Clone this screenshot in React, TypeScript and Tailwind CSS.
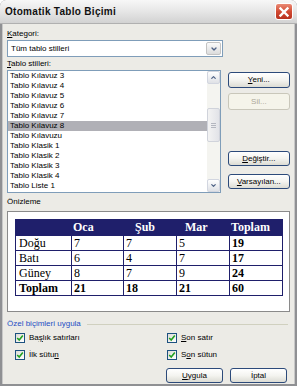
import { ChevronDown, ChevronUp } from 'lucide-react'

const styles = [
    'Tablo Kılavuz 3',
    'Tablo Kılavuz 4',
    'Tablo Kılavuz 5',
    'Tablo Kılavuz 6',
    'Tablo Kılavuz 7',
    'Tablo Kılavuz 8',
    'Tablo Kılavuzu',
    'Tablo Klasik 1',
    'Tablo Klasik 2',
    'Tablo Klasik 3',
    'Tablo Klasik 4',
    'Tablo Liste 1',
]

const rows = [
    { name: 'Doğu', v: ['7', '7', '5'], total: '19' },
    { name: 'Batı', v: ['6', '4', '7'], total: '17' },
    { name: 'Güney', v: ['8', '7', '9'], total: '24' },
]

function XpButton({ children, disabled, className = '' }: { children: React.ReactNode; disabled?: boolean; className?: string }) {
    return (
        <div
            className={
                'flex items-center justify-center rounded-[3px] border ' +
                (disabled
                    ? 'border-[#c9c7ba] bg-[#f5f4ea] text-[#aca899] '
                    : 'border-[#2c4a7a] bg-gradient-to-b from-white via-[#f4f4f0] to-[#dcdcd4] text-black ') +
                className
            }
        >
            {children}
        </div>
    )
}

function Check({ label }: { label: React.ReactNode }) {
    return (
        <div className="flex items-center gap-[4px] h-[12px]">
            <div className="w-[10px] h-[10px] border border-[#1c5180] bg-gradient-to-br from-[#dcdcd6] to-white flex items-center justify-center">
                <svg viewBox="0 0 10 10" className="w-[8px] h-[8px]">
                    <path d="M1.5 5 L4 7.5 L8.5 2" stroke="#21a121" strokeWidth="2" fill="none" />
                </svg>
            </div>
            <span>{label}</span>
        </div>
    )
}

export default function App() {
    return (
        <div className="w-[297px] h-[386px] bg-[#8f9093] p-[2px] pt-0 rounded-t-[6px] font-['Liberation_Sans',Arial,sans-serif] text-[8px] text-black overflow-hidden">
            <div className="h-[24px] flex items-center justify-between px-[3px] bg-gradient-to-b from-[#f7f7f7] via-[#e6e6e6] to-[#d2d2d2] rounded-t-[5px] border-b border-[#b0b0b0] -mx-[2px]">
                <span className="text-[10px] font-bold text-[#111] tracking-[0.3px] pl-[2px]">Otomatik Tablo Biçimi</span>
                <div className="w-[18px] h-[17px] rounded-[3px] border border-white bg-gradient-to-b from-[#e98a75] via-[#d24a33] to-[#b8321f] flex items-center justify-center mr-[1px]">
                    <svg viewBox="0 0 12 12" className="w-[12px] h-[12px]">
                        <path d="M2.5 2.5 L9.5 9.5 M9.5 2.5 L2.5 9.5" stroke="white" strokeWidth="2.4" strokeLinecap="square" />
                    </svg>
                </div>
            </div>

            <div className="h-[360px] bg-[#ecebe6] border-x border-[#c8c8c8] px-[4px] flex flex-col">
                <div className="mt-[5px] h-[10px] leading-[10px]">
                    <u>K</u>ategori:
                </div>
                <div className="mt-[1px] w-[216px] h-[17px] bg-white border border-[#7f9db9] flex items-center justify-between pl-[3px] pr-[1px]">
                    <span>Tüm tablo stilleri</span>
                    <div className="w-[15px] h-[13px] rounded-[2px] bg-gradient-to-b from-[#fbfbfb] to-[#dcdcdc] border border-[#c3c3c3] flex items-center justify-center">
                        <ChevronDown className="w-[8px] h-[8px] text-[#4d6185]" strokeWidth={4} />
                    </div>
                </div>
                <div className="mt-[2px] h-[10px] leading-[10px]">
                    <u>T</u>ablo stilleri:
                </div>

                <div className="flex mt-[1px]">
                    <div className="w-[216px] h-[123px] bg-white border border-[#7f9db9] flex">
                        <div className="flex-1">
                            {styles.map((s) => (
                                <div
                                    key={s}
                                    className={'h-[10px] leading-[10px] pl-[2px] ' + (s === 'Tablo Kılavuz 8' ? 'bg-[#b0b0b6]' : '')}
                                >
                                    {s}
                                </div>
                            ))}
                        </div>
                        <div className="w-[13px] bg-[#f4f4f0] flex flex-col">
                            <div className="h-[13px] rounded-[2px] border border-[#d2d6e0] bg-gradient-to-b from-white to-[#dfe1e6] flex items-center justify-center">
                                <ChevronUp className="w-[7px] h-[7px] text-[#4d6185]" strokeWidth={4} />
                            </div>
                            <div className="h-[24px]" />
                            <div className="h-[34px] rounded-[2px] border border-[#d0d3db] bg-gradient-to-r from-[#f3f3f3] to-[#e2e3e8] flex flex-col items-center justify-center gap-[1px]">
                                <div className="w-[5px] h-px bg-[#b4b7c0]" />
                                <div className="w-[5px] h-px bg-[#b4b7c0]" />
                                <div className="w-[5px] h-px bg-[#b4b7c0]" />
                            </div>
                            <div className="flex-1" />
                            <div className="h-[13px] rounded-[2px] border border-[#d2d6e0] bg-gradient-to-b from-white to-[#dfe1e6] flex items-center justify-center">
                                <ChevronDown className="w-[7px] h-[7px] text-[#4d6185]" strokeWidth={4} />
                            </div>
                        </div>
                    </div>

                    <div className="ml-[7px] w-[63px] flex flex-col">
                        <XpButton className="mt-[2px] h-[16px]">
                            <span><u>Y</u>eni...</span>
                        </XpButton>
                        <XpButton disabled className="mt-[5px] h-[17px]">
                            <span>Sil...</span>
                        </XpButton>
                        <XpButton className="mt-[41px] h-[15px]">
                            <span><u>D</u>eğiştir...</span>
                        </XpButton>
                        <XpButton className="mt-[8px] h-[15px]">
                            <span><u>V</u>arsayılan...</span>
                        </XpButton>
                    </div>
                </div>

                <div className="mt-[4px] h-[10px] leading-[10px]">Önizleme</div>
                <div className="mt-[4px] w-[283px] h-[101px] bg-white border border-[#8a8a8a] pt-[7px] pl-[7px]">
                    <div className="w-[268px] border border-[#1f1f6b] font-['Liberation_Serif','Times_New_Roman',serif] text-[12px]">
                        <div className="grid grid-cols-[55px_52px_53px_53px_1fr] h-[15px] bg-[#1f1f6b] text-white font-bold leading-[15px]">
                            <div />
                            <div className="pl-[2px]">Oca</div>
                            <div className="pl-[12px]">Şub</div>
                            <div className="pl-[9px]">Mar</div>
                            <div className="pl-[2px]">Toplam</div>
                        </div>
                        {rows.map((r) => (
                            <div key={r.name} className="grid grid-cols-[55px_52px_53px_53px_1fr] h-[15px] leading-[15px] border-t border-[#1f1f6b]">
                                <div className="pl-[3px]">{r.name}</div>
                                {r.v.map((x, i) => (
                                    <div key={i} className="pl-[2px] border-l border-[#1f1f6b]">{x}</div>
                                ))}
                                <div className="pl-[2px] border-l border-[#1f1f6b] font-bold">{r.total}</div>
                            </div>
                        ))}
                        <div className="grid grid-cols-[55px_52px_53px_53px_1fr] h-[15px] leading-[15px] border-t border-[#1f1f6b] font-bold">
                            <div className="pl-[3px]">Toplam</div>
                            <div className="pl-[2px] border-l border-[#1f1f6b]">21</div>
                            <div className="pl-[2px] border-l border-[#1f1f6b]">18</div>
                            <div className="pl-[2px] border-l border-[#1f1f6b]">21</div>
                            <div className="pl-[2px] border-l border-[#1f1f6b]">60</div>
                        </div>
                    </div>
                </div>

                <div className="mt-[7px] flex items-center gap-[6px] h-[10px]">
                    <span className="text-[#1f4fc4]">Özel biçimleri uygula</span>
                    <div className="flex-1 h-px bg-[#d0d0bf] mr-[2px]" />
                </div>
                <div className="mt-[3px] grid grid-cols-[152px_1fr] pl-[8px] gap-y-[5px]">
                    <Check label={<>Ba<u>ş</u>lık satırları</>} />
                    <Check label={<><u>S</u>on satır</>} />
                    <Check label={<>İlk sütu<u>n</u></>} />
                    <Check label={<>S<u>o</u>n sütun</>} />
                </div>
                <div className="mt-[7px] flex justify-end gap-[7px] pr-[3px]">
                    <XpButton className="w-[57px] h-[15px]">
                        <span><u>U</u>ygula</span>
                    </XpButton>
                    <XpButton className="w-[57px] h-[15px]">
                        <span>İptal</span>
                    </XpButton>
                </div>
            </div>
        </div>
    )
}
